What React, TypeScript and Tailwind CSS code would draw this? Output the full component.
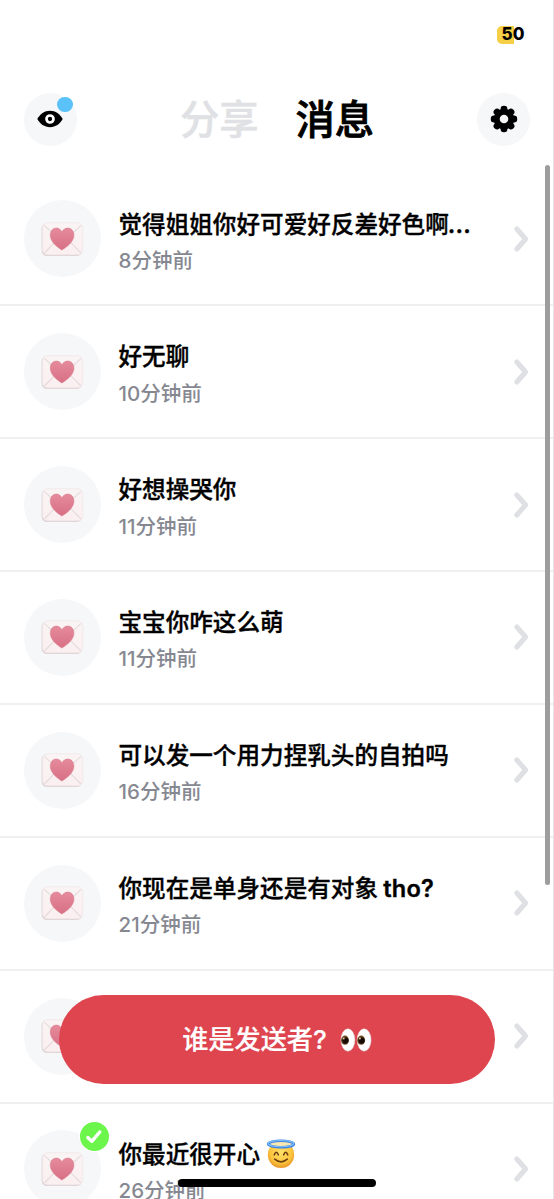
interface Message {
  id: number;
  text: string;
  latin?: string;
  time: string;
  angel?: boolean;
  replied?: boolean;
}

const messages: Message[] = [
  { id: 1, text: "觉得姐姐你好可爱好反差好色啊", latin: "...", time: "8分钟前" },
  { id: 2, text: "好无聊", time: "10分钟前" },
  { id: 3, text: "好想操哭你", time: "11分钟前" },
  { id: 4, text: "宝宝你咋这么萌", time: "11分钟前" },
  { id: 5, text: "可以发一个用力捏乳头的自拍吗", time: "16分钟前" },
  { id: 6, text: "你现在是单身还是有对象", latin: " tho?", time: "21分钟前" },
  { id: 7, text: "", time: "" },
  { id: 8, text: "你最近很开心", time: "26分钟前", angel: true, replied: true },
];

function EyeIcon() {
  return (
    <svg className="mr-0.5" width="26" height="18" viewBox="0 0 26 18">
      <path d="M0.3 9C3 4.2 7.4 0.8 13 0.8S23 4.2 25.7 9C23 13.8 18.6 17.2 13 17.2S3 13.8 0.3 9Z" fill="#000" />
      <circle cx="13" cy="9" r="3.5" fill="#000" stroke="#fff" strokeWidth="2.7" />
    </svg>
  );
}

function GearIcon() {
  return (
    <svg width="28" height="28" viewBox="-14 -14 28 28">
      {[0, 45, 90, 135].map((angle) => (
        <rect key={angle} x="-3.4" y="-13.2" width="6.8" height="26.4" rx="3.2" transform={`rotate(${angle})`} />
      ))}
      <circle r="10.3" />
      <circle r="4.3" fill="#f6f7f9" />
    </svg>
  );
}

function Envelope() {
  return (
    <svg width="44" height="36" viewBox="0 0 44 36">
      <defs>
        <linearGradient id="paper" x1="0" y1="0" x2="0" y2="1">
          <stop offset="0" stopColor="#faf4f4" />
          <stop offset="1" stopColor="#fbeff0" />
        </linearGradient>
        <linearGradient id="heart" x1="0" y1="0" x2="0" y2="1">
          <stop offset="0" stopColor="#e58b9c" />
          <stop offset="1" stopColor="#d86f84" />
        </linearGradient>
      </defs>
      <rect x="1.6" y="2" width="40.4" height="33" rx="5.4" fill="#ded3d4" />
      <rect x="2.6" y="1.8" width="40.2" height="32" rx="5" fill="url(#paper)" stroke="#efe5e6" strokeWidth="0.7" />
      <path d="M4.5 4.4L19.5 19Q22.5 21.4 25.5 19L41 4.4M4.5 32L17.5 18.4M41 32L27.5 18.4" fill="none" stroke="#e6dbdc" strokeWidth="1.1" />
      <path
        d="M21.9 29C17.1 26.2 10.3 20.7 10.3 14.3C10.3 10 12.9 7.1 16.3 7.1C19.1 7.1 20.9 8.9 21.9 10.9C22.9 8.9 24.9 7.1 27.9 7.1C31.3 7.1 33.9 10 33.9 14.3C33.9 20.7 26.7 26.2 21.9 29Z"
        fill="url(#heart)"
        stroke="#d97b8d"
        strokeWidth="0.6"
      />
    </svg>
  );
}

function Chevron() {
  return (
    <svg className="shrink-0" width="16" height="28" viewBox="0 0 16 28">
      <path d="M3.8 4L12.6 14L3.8 24" fill="none" stroke="#dfe0e3" strokeWidth="5" strokeLinecap="round" strokeLinejoin="round" />
    </svg>
  );
}

function AngelEmoji() {
  return (
    <svg className="shrink-0" width="30" height="30" viewBox="0 0 30 30">
      <defs>
        <radialGradient id="face" cx="0.5" cy="0.4" r="0.6">
          <stop offset="0" stopColor="#ffe169" />
          <stop offset="0.7" stopColor="#fbc33c" />
          <stop offset="1" stopColor="#e9952a" />
        </radialGradient>
      </defs>
      <circle cx="15" cy="15.8" r="13.2" fill="url(#face)" />
      <ellipse cx="15" cy="5" rx="12.8" ry="3.2" fill="#f9e7b0" stroke="#3f83e4" strokeWidth="2.6" />
      <ellipse cx="15" cy="4.6" rx="12.8" ry="3.1" fill="none" stroke="#7fc0f8" strokeWidth="1.1" />
      <path d="M8.3 15.8Q10.3 10.6 12.3 15.8M17.7 15.8Q19.7 10.6 21.7 15.8M8.7 20.2Q15 25.6 21.3 20.2" fill="none" stroke="#6b3d10" strokeWidth="1.6" strokeLinecap="round" />
    </svg>
  );
}

function EyesEmoji() {
  return (
    <svg width="32" height="24" viewBox="0 0 32 24">
      {[0, 16.2].map((x) => (
        <g key={x} transform={`translate(${x} 0)`}>
          <ellipse cx="7.9" cy="12" rx="7" ry="11.3" fill="#fff" stroke="#d8c6c9" strokeWidth="0.5" />
          <ellipse cx="5" cy="12.2" rx="3.9" ry="4.6" fill="#6b4722" />
          <circle cx="5.4" cy="12.6" r="3.1" fill="#170d06" />
          <circle cx="3.7" cy="10.5" r="1" fill="#d9c7a8" />
        </g>
      ))}
    </svg>
  );
}

function ReplyBadge() {
  return (
    <span className="absolute -top-[9px] left-[55px] flex size-[31px] items-center justify-center rounded-full bg-white">
      <span className="flex size-[29px] items-center justify-center rounded-full bg-[#6cf54a]">
        <svg width="18" height="16" viewBox="0 0 18 16">
          <path d="M2.8 8.6L6.8 12.3L14.8 3" fill="none" stroke="#fff" strokeWidth="3.4" strokeLinecap="round" strokeLinejoin="round" />
        </svg>
      </span>
    </span>
  );
}

function MessageRow({ message }: { message: Message }) {
  return (
    <div className="flex h-[132.9px] shrink-0 items-center border-b-2 border-[#f0f0f1] pr-[24px] pl-[23.5px]">
      <div className="relative flex size-[77px] shrink-0 items-center justify-center rounded-full bg-[#f6f7f9]">
        <Envelope />
        {message.replied && <ReplyBadge />}
      </div>
      <div className="ml-[18px] flex-1 pt-[7px] whitespace-nowrap">
        <div className="flex h-[37px] items-center gap-[6px] text-[23.6px] font-medium text-black [-webkit-text-stroke:0.35px_#000]">
          <span className="whitespace-pre">
            {message.text}
            {message.latin && <span className="-ml-px font-semibold tracking-[0.2px]">{message.latin}</span>}
          </span>
          {message.angel && <AngelEmoji />}
        </div>
        <div className="h-9 text-[20.5px] leading-9 font-medium text-[#868891]">{message.time}</div>
      </div>
      <Chevron />
    </div>
  );
}

export default function App() {
  return (
    <div className="relative flex h-[1199px] w-[554px] flex-col overflow-hidden border-r border-[#e6e6e7] bg-white font-['Inter','Noto_Sans_CJK_SC',sans-serif]">
      <div className="flex h-[66px] shrink-0 items-center justify-end pt-[3px] pr-[28px]">
        <div className="flex h-[18px] w-[28px] items-center justify-center rounded-[5px] bg-[linear-gradient(90deg,#f5cf45_60%,transparent_60%)] text-[17px] font-extrabold">
          <span className="ml-[4px]">50</span>
        </div>
      </div>

      <header className="flex h-[106px] shrink-0 items-center justify-between pr-[23px] pl-6">
        <button className="relative flex size-[53px] items-center justify-center rounded-full bg-[#f6f7f9]">
          <EyeIcon />
          <span className="absolute top-1 left-[33px] size-[15.5px] rounded-full bg-[#5bc2f9]" />
        </button>
        <nav className="flex gap-[37px] pt-[2px] text-[39.3px] leading-none font-medium">
          <span className="text-[#e0e1e4] [-webkit-text-stroke:0.5px_#e0e1e4]">分享</span>
          <span className="text-black [-webkit-text-stroke:0.8px_#000]">消息</span>
        </nav>
        <button className="flex size-[53px] items-center justify-center rounded-full bg-[#f6f7f9]">
          <GearIcon />
        </button>
      </header>

      <main className="flex flex-1 flex-col overflow-hidden pt-[1.3px]">
        {messages.map((message) => (
          <MessageRow key={message.id} message={message} />
        ))}
      </main>

      {/* scroll indicator */}
      <div className="absolute top-[165px] left-[545px] h-[720px] w-[5px] rounded-full bg-[#9d9d9e]" />

      <button className="absolute top-[995px] left-[59px] flex h-[89px] w-[436px] items-center justify-center gap-[13px] rounded-full bg-[#de454f] text-[26.2px] font-medium text-white [-webkit-text-stroke:0.2px_#fff]">
        <span>谁是发送者?</span>
        <EyesEmoji />
      </button>

      <div className="absolute top-[1179px] left-[178px] h-2 w-[198px] rounded-full bg-black" />
    </div>
  );
}
